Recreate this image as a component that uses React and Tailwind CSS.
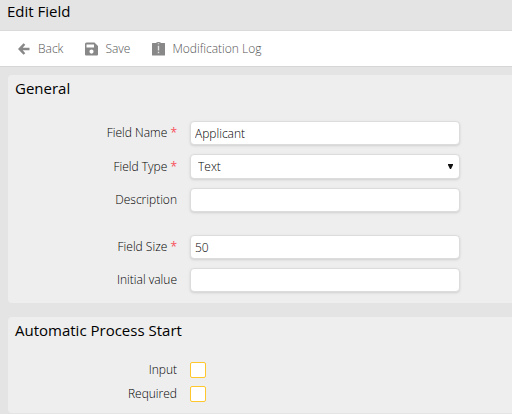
import React, { useState } from "react";

const inputClass =
  "block h-6 w-full rounded-sm border border-[#dcdcdc] bg-white px-1 text-xs text-black shadow-sm outline-none";

const titleClass = "px-[7px] pb-0.5 text-[15px] leading-[18px] font-medium text-black";

const BackIcon = () => (
  <svg width="14" height="14" viewBox="0 0 14 14" fill="#888" aria-hidden="true">
    <path d="M1 7 6.5 1.2 8.3 2.8 5.7 5.7H12.5V8.3H5.7L8.3 11.2 6.5 12.8Z" />
  </svg>
);

const SaveIcon = () => (
  <svg width="14" height="14" viewBox="0 0 14 14" fill="#888" aria-hidden="true">
    <path
      fillRule="evenodd"
      d="M2.500 .5H10.500L14 4V12.500Q14 13.500 13 13.500H2Q1 13.500 1 12.500V2Q1 .5 2.500 .5ZM2.500 2.500V5.500H10V2.500ZM7.500 7.500A2.100 2.100 0 1 0 7.500 11.700 2.100 2.100 0 1 0 7.500 7.500Z"
    />
  </svg>
);

const LogIcon = () => (
  <svg width="14" height="14" viewBox="0 0 14 14" aria-hidden="true">
    <path
      fill="#888"
      d="M1.500 1H5Q5.500 0 7.500 0T10 1H13.500Q14 1 14 1.500V13Q14 13.500 13.500 13.500H1.500Q1 13.500 1 13V1.500Q1 1 1.500 1Z"
    />
    <path fill="#e4e4e4" d="M6.800 1.300H8.200V2.300H6.800ZM6.800 3.800H8.200V8.500H6.800ZM6.800 9.800H8.200V11.300H6.800Z" />
  </svg>
);

const ToolbarButton = ({ icon, children }) => (
  <button type="button" className="flex items-center gap-[7px] text-xs text-[#555]">
    {icon}
    {children}
  </button>
);

const Panel = ({ title, children }) => (
  <section className="rounded-l-sm bg-[#eee] pt-1 pb-[11px]">
    <h2 className={titleClass}>{title}</h2>
    {children}
  </section>
);

const Row = ({ id, label, required, children }) => (
  <div className="flex items-center gap-[13px]">
    <label htmlFor={id} className="w-[169px] shrink-0 text-right text-xs text-black">
      {label}
      {required && <span className="font-normal text-[#f8505c]"> *</span>}
    </label>
    <div className="w-full max-w-[270px]">{children}</div>
  </div>
);

const CheckRow = ({ id, label }) => (
  <Row id={id} label={label}>
    <input
      id={id}
      type="checkbox"
      className="block size-4 appearance-none rounded-xs border border-[#ffc72c] bg-white checked:bg-[#ffc72c]"
    />
  </Row>
);

const App = () => {
  const [field, setField] = useState({
    name: "Applicant",
    type: "Text",
    description: "",
    size: "50",
    initial: "",
  });

  const handleChange = (e) => {
    setField({ ...field, [e.target.name]: e.target.value });
  };

  return (
    <div className="min-h-screen bg-[#e4e4e4] font-['Open_Sans','Noto_Sans',sans-serif] font-light">
      <header className="border-b border-[#dadada] pt-0.5 pb-2">
        <h1 className={titleClass}>Edit Field</h1>
      </header>

      <div className="flex h-9 items-center gap-[21px] border-b border-[#d6d6d6] bg-white px-[17px]">
        <ToolbarButton icon={<BackIcon />}>Back</ToolbarButton>
        <ToolbarButton icon={<SaveIcon />}>Save</ToolbarButton>
        <ToolbarButton icon={<LogIcon />}>Modification Log</ToolbarButton>
      </div>

      <form className="flex flex-col gap-3.5 pt-2 pl-2">
        <Panel title="General">
          <div className="flex flex-col gap-[23px] pt-[22px]">
            <div className="flex flex-col gap-[9px]">
              <Row id="name" label="Field Name" required>
                <input id="name" name="name" value={field.name} onChange={handleChange} className={inputClass} />
              </Row>
              <Row id="type" label="Field Type" required>
                <div className="relative">
                  <select
                    id="type"
                    name="type"
                    value={field.type}
                    onChange={handleChange}
                    className="block h-[25px] w-full appearance-none rounded-sm border border-[#dcdcdc] bg-white px-[7px] text-xs text-black shadow-sm outline-none"
                  >
                    <option value="Text">Text</option>
                    <option value="Number">Number</option>
                    <option value="Date">Date</option>
                  </select>
                  <svg
                    className="pointer-events-none absolute top-2.5 right-[7px]"
                    width="5"
                    height="5"
                    viewBox="0 0 5 5"
                    fill="#111"
                    aria-hidden="true"
                  >
                    <path d="M0 0H5V1L3 5H2L0 1Z" />
                  </svg>
                </div>
              </Row>
              <Row id="description" label="Description">
                <input
                  id="description"
                  name="description"
                  value={field.description}
                  onChange={handleChange}
                  className={inputClass}
                />
              </Row>
            </div>
            <div className="flex flex-col gap-[9px]">
              <Row id="size" label="Field Size" required>
                <input id="size" name="size" value={field.size} onChange={handleChange} className={inputClass} />
              </Row>
              <Row id="initial" label="Initial value">
                <input
                  id="initial"
                  name="initial"
                  value={field.initial}
                  onChange={handleChange}
                  className={inputClass}
                />
              </Row>
            </div>
          </div>
        </Panel>

        <Panel title="Automatic Process Start">
          <div className="flex flex-col gap-2 pt-[21px]">
            <CheckRow id="input" label="Input" />
            <CheckRow id="required" label="Required" />
          </div>
        </Panel>
      </form>
    </div>
  );
};

export default App;
